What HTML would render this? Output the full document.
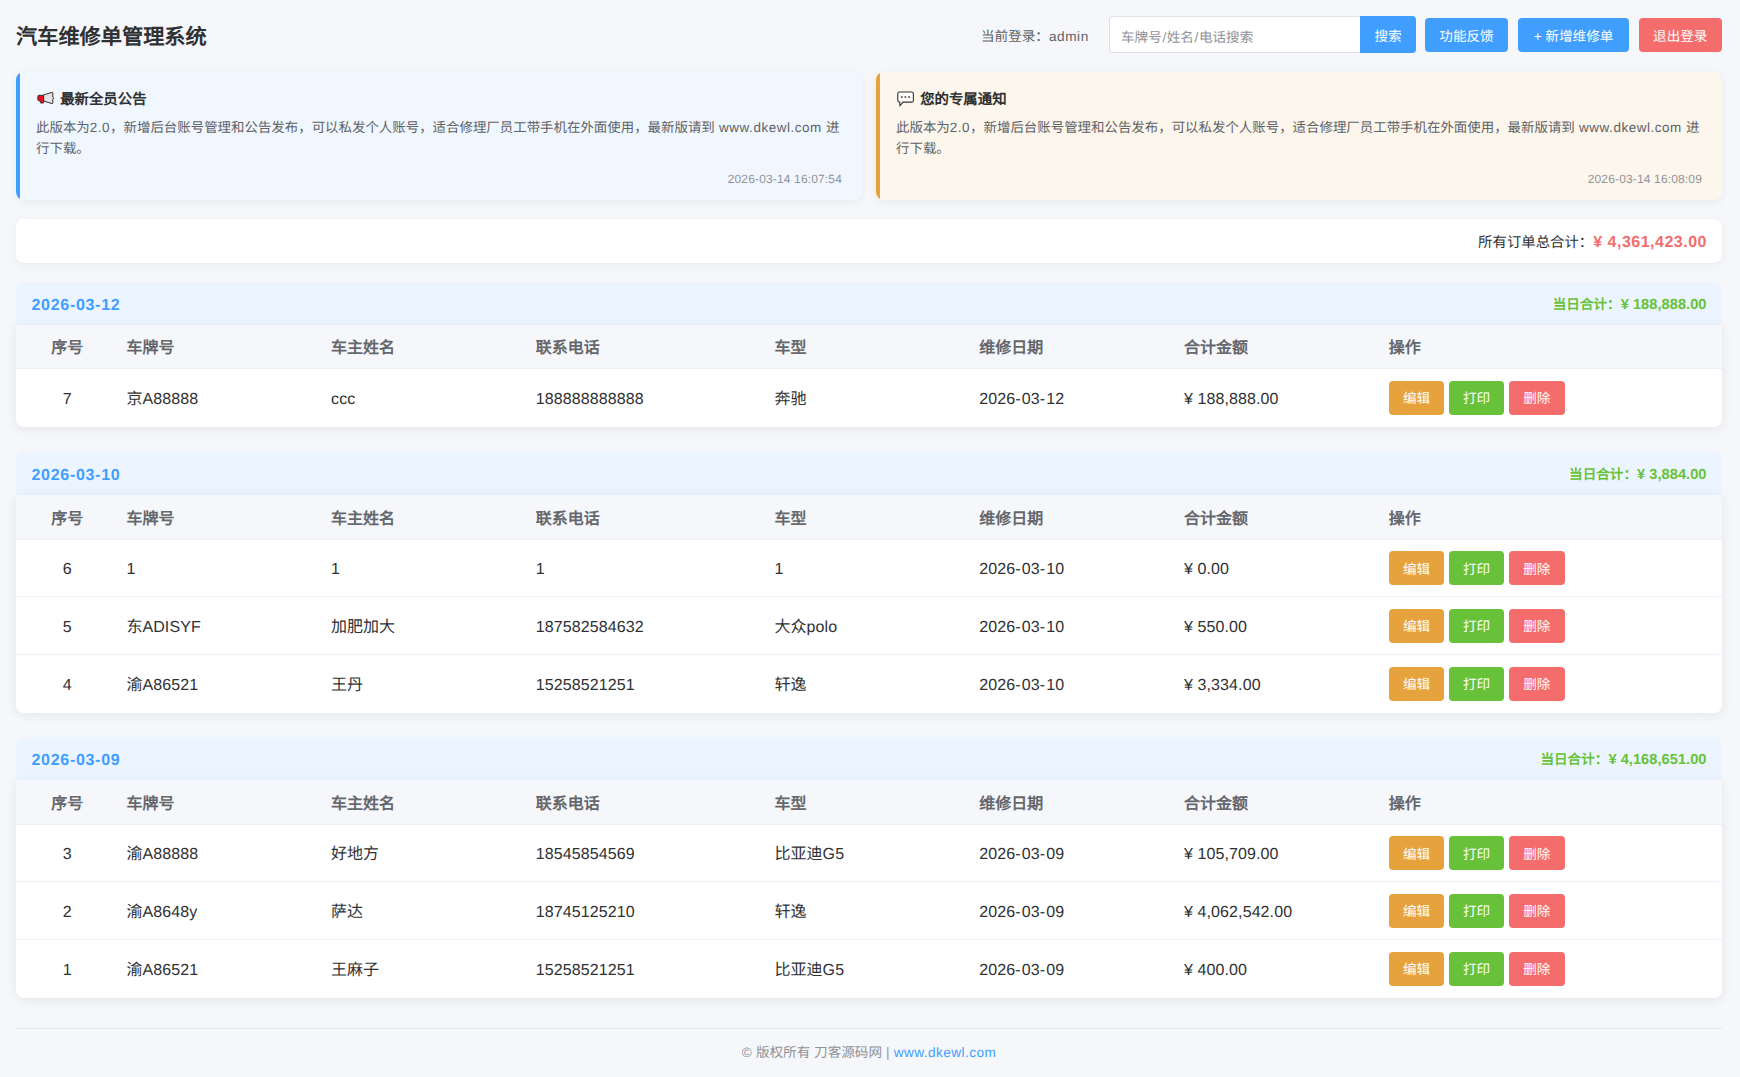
<!DOCTYPE html>
<html lang="zh-CN">
<head>
<meta charset="utf-8">
<title>汽车维修单管理系统</title>
<style>
*{box-sizing:border-box;margin:0;padding:0}
html,body{width:1740px;height:1077px;overflow:hidden}
body{background:#f5f7fa;font-family:"Liberation Sans",sans-serif;text-rendering:geometricPrecision;color:#303133;position:relative}
.abs{position:absolute}
.title{left:16px;top:22.7px;font-size:21.2px;font-weight:bold;line-height:30px;color:#303133;white-space:nowrap}
.login{left:981px;top:28px;font-size:13.6px;line-height:18px;color:#606266;white-space:nowrap}
.login .l{letter-spacing:0.55px}
.input{left:1109px;top:16.2px;width:252px;height:36.4px;background:#fff;border:1px solid #dcdfe6;border-right:none;border-radius:4px 0 0 4px;font-size:13.6px;color:#909399;padding:11.8px 0 0 11px;line-height:18px;white-space:nowrap}
.sl{margin:0 0.6px}
.btn{position:absolute;color:#fff;font-size:13.6px;line-height:18px;text-align:center;border-radius:4px;white-space:nowrap;display:flex;align-items:center;justify-content:center;padding-top:3px}
.btn span.t{position:relative;top:1px}
.blue{background:#409eff}
.red{background:#f56c6c}
.green{background:#67c23a}
.orange{background:#e6a23c}

.notice{top:72.3px;height:127.6px;width:846px;border-radius:8px;box-shadow:0 2px 10px rgba(0,0,0,0.06);overflow:hidden}
.n1{left:16px;background:#f0f7ff}
.n1 .bar{background:#409eff}
.n2{left:876px;background:#fdf6ec}
.n2 .bar{background:#e6a23c}
.bar{position:absolute;left:0;top:0;width:4px;height:100%}
.ico{position:absolute;left:0;top:3px}
.ntitle{position:absolute;left:20px;top:15.7px;height:24px;font-size:14.4px;font-weight:bold;line-height:24px;color:#303133;white-space:nowrap}
.ntitle .tt{position:absolute;left:24.2px;top:0}
.ntext{position:absolute;left:20px;font-size:13.45px;line-height:20px;color:#606266;white-space:nowrap}
.ntext .l{letter-spacing:0.55px}
.ndate{position:absolute;right:20px;top:99px;letter-spacing:0.15px;font-size:12px;line-height:16px;color:#909399;white-space:nowrap}

.summary{left:16px;top:219px;width:1706px;height:44px;background:#fff;border-radius:8px;box-shadow:0 2px 10px rgba(0,0,0,0.05)}
.sumtext{position:absolute;right:15px;top:13.5px;line-height:20px;font-size:14.4px;color:#303133;white-space:nowrap}
.sumtext b{color:#f56c6c;font-size:16px;letter-spacing:0.5px}

.group{left:16px;width:1706px}
.ghead{position:relative;height:42.9px;background:#ecf5ff;border-radius:8px 8px 0 0}
.gdate{position:absolute;left:15.5px;top:14.2px;line-height:20px;font-size:16px;font-weight:bold;color:#409eff;letter-spacing:0.7px}
.gsum{position:absolute;right:15.5px;top:12.8px;line-height:20px;font-size:13.6px;font-weight:bold;color:#67c23a;white-space:nowrap}
.gsum .l{letter-spacing:0.05px;font-size:14.6px}
.gbody{position:relative;background:#fff;border-radius:0 0 8px 8px;box-shadow:0 2px 12px rgba(0,0,0,0.08);overflow:hidden}
.row{position:relative;height:57.75px;border-bottom:1px solid #f0f2f6}
.row:last-child{border-bottom:none}
.th{height:44.4px;background:#f5f7fa;border-bottom:1px solid #eef0f4}
.c{position:absolute;top:2px;height:100%;display:flex;align-items:center;white-space:nowrap;font-size:16px;line-height:22px}
.c .l{letter-spacing:0.1px}
.c .h{letter-spacing:1.1px}
.th .c{font-weight:bold;color:#66686d;top:3px}
.c1{left:0;width:102.4px;justify-content:center}
.c2{left:110.4px}
.c3{left:315.1px}
.c4{left:519.8px}
.c5{left:758.6px}
.c6{left:963.3px}
.c7{left:1168px}
.c8{left:1372.7px}
.rb{position:absolute;top:11.5px;width:55.7px;height:34px;border-radius:4px;color:#fff;font-size:13.6px;line-height:18px;display:flex;align-items:center;justify-content:center;padding-top:3px}
.rb1{left:1372.7px}
.rb2{left:1432.7px}
.rb3{left:1493px}

.footline{left:16px;top:1028px;width:1706px;height:1px;background:#e4e7ed}
.foot{left:16px;width:1706px;top:1043px;text-align:center;font-size:13.6px;line-height:20px;color:#909399;white-space:nowrap}
.foot .l{letter-spacing:0.2px}
.foot .a{color:#409eff;letter-spacing:0.45px}
</style>
</head>
<body>
<div class="abs title">汽车维修单管理系统</div>
<div class="abs login">当前登录：<span class="l">admin</span></div>
<div class="abs input">车牌号<span class="sl">/</span>姓名<span class="sl">/</span>电话搜索</div>
<div class="btn blue" style="left:1360px;top:16.2px;width:56px;height:36.4px;padding-top:5.6px;border-radius:0 4px 4px 0">搜索</div>
<div class="btn blue" style="left:1425px;top:18px;width:83px;height:34px">功能反馈</div>
<div class="btn blue" style="left:1518px;top:18px;width:111px;height:34px">+ 新增维修单</div>
<div class="btn red" style="left:1638.5px;top:18px;width:83.5px;height:34px">退出登录</div>
<div class="abs notice n1"><div class="bar"></div><div class="ntitle"><svg class="ico" width="19" height="14" viewBox="0 0 19 14"><path d="M7.5 3.9 L16 1.4 Q16.8 1.2 16.8 2 L16.8 6.2 L17.9 7.2 L16.8 8.2 L16.8 12 Q16.8 12.8 16 12.6 L7.5 10 Z" fill="#e4e4e4" stroke="#333" stroke-width="1"/><path d="M3 4.3 L7.7 4.3 L7.7 11.3 Q7.7 12.1 6.9 12.1 L5.1 12.1 Q4.3 12.1 4.3 11.3 L4.3 9.7 L3 9.7 Q1.8 9.7 1.8 8.5 L1.8 5.5 Q1.8 4.3 3 4.3 Z" fill="#e8101e" stroke="#2a2a2a" stroke-width="0.9"/></svg><span class="tt">最新全员公告</span></div><div class="ntext" style="top:45.5px">此版本为<span class="l">2.0</span>，新增后台账号管理和公告发布，可以私发个人账号，适合修理厂员工带手机在外面使用，最新版请到<span class="l"> www.dkewl.com </span>进</div><div class="ntext" style="top:66.5px">行下载。</div><div class="ndate">2026-03-14 16:07:54</div></div>
<div class="abs notice n2"><div class="bar"></div><div class="ntitle"><svg class="ico" width="19" height="16" viewBox="0 0 19 16"><path d="M3.4 1.05 L15.6 1.05 Q17.35 1.05 17.35 2.8 L17.35 9.4 Q17.35 11.15 15.6 11.15 L7 11.15 L4 14.6 L3.7 11.1 Q1.75 10.8 1.75 9.2 L1.75 2.8 Q1.75 1.05 3.4 1.05 Z" fill="#fff" stroke="#333" stroke-width="1.1"/><circle cx="5.8" cy="6.1" r="1" fill="#555"/><circle cx="9.4" cy="6.1" r="1" fill="#555"/><circle cx="13.1" cy="6.1" r="1" fill="#555"/></svg><span class="tt">您的专属通知</span></div><div class="ntext" style="top:45.5px">此版本为<span class="l">2.0</span>，新增后台账号管理和公告发布，可以私发个人账号，适合修理厂员工带手机在外面使用，最新版请到<span class="l"> www.dkewl.com </span>进</div><div class="ntext" style="top:66.5px">行下载。</div><div class="ndate">2026-03-14 16:08:09</div></div>
<div class="abs summary"><div class="sumtext">所有订单总合计：<b>¥ 4,361,423.00</b></div></div>
<div class="abs group" style="top:281.8px"><div class="ghead"><div class="gdate">2026-03-12</div><div class="gsum">当日合计：<span class="l">¥ 188,888.00</span></div></div><div class="gbody"><div class="row th"><div class="c c1">序号</div><div class="c c2">车牌号</div><div class="c c3">车主姓名</div><div class="c c4">联系电话</div><div class="c c5">车型</div><div class="c c6">维修日期</div><div class="c c7">合计金额</div><div class="c c8">操作</div></div><div class="row"><div class="c c1"><span class="l">7</span></div><div class="c c2">京<span class="l">A88888</span></div><div class="c c3"><span class="l">ccc</span></div><div class="c c4"><span class="l">188888888888</span></div><div class="c c5">奔驰</div><div class="c c6"><span class="l">2026<span class="h">-</span>03<span class="h">-</span>12</span></div><div class="c c7"><span class="l">¥ 188,888.00</span></div><div class="rb orange rb1">编辑</div><div class="rb green rb2">打印</div><div class="rb red rb3">删除</div></div></div></div>

<div class="abs group" style="top:452.3px"><div class="ghead"><div class="gdate">2026-03-10</div><div class="gsum">当日合计：<span class="l">¥ 3,884.00</span></div></div><div class="gbody"><div class="row th"><div class="c c1">序号</div><div class="c c2">车牌号</div><div class="c c3">车主姓名</div><div class="c c4">联系电话</div><div class="c c5">车型</div><div class="c c6">维修日期</div><div class="c c7">合计金额</div><div class="c c8">操作</div></div><div class="row"><div class="c c1"><span class="l">6</span></div><div class="c c2"><span class="l">1</span></div><div class="c c3"><span class="l">1</span></div><div class="c c4"><span class="l">1</span></div><div class="c c5"><span class="l">1</span></div><div class="c c6"><span class="l">2026<span class="h">-</span>03<span class="h">-</span>10</span></div><div class="c c7"><span class="l">¥ 0.00</span></div><div class="rb orange rb1">编辑</div><div class="rb green rb2">打印</div><div class="rb red rb3">删除</div></div><div class="row"><div class="c c1"><span class="l">5</span></div><div class="c c2">东<span class="l">ADISYF</span></div><div class="c c3">加肥加大</div><div class="c c4"><span class="l">187582584632</span></div><div class="c c5">大众<span class="l">polo</span></div><div class="c c6"><span class="l">2026<span class="h">-</span>03<span class="h">-</span>10</span></div><div class="c c7"><span class="l">¥ 550.00</span></div><div class="rb orange rb1">编辑</div><div class="rb green rb2">打印</div><div class="rb red rb3">删除</div></div><div class="row"><div class="c c1"><span class="l">4</span></div><div class="c c2">渝<span class="l">A86521</span></div><div class="c c3">王丹</div><div class="c c4"><span class="l">15258521251</span></div><div class="c c5">轩逸</div><div class="c c6"><span class="l">2026<span class="h">-</span>03<span class="h">-</span>10</span></div><div class="c c7"><span class="l">¥ 3,334.00</span></div><div class="rb orange rb1">编辑</div><div class="rb green rb2">打印</div><div class="rb red rb3">删除</div></div></div></div>

<div class="abs group" style="top:737.3px"><div class="ghead"><div class="gdate">2026-03-09</div><div class="gsum">当日合计：<span class="l">¥ 4,168,651.00</span></div></div><div class="gbody"><div class="row th"><div class="c c1">序号</div><div class="c c2">车牌号</div><div class="c c3">车主姓名</div><div class="c c4">联系电话</div><div class="c c5">车型</div><div class="c c6">维修日期</div><div class="c c7">合计金额</div><div class="c c8">操作</div></div><div class="row"><div class="c c1"><span class="l">3</span></div><div class="c c2">渝<span class="l">A88888</span></div><div class="c c3">好地方</div><div class="c c4"><span class="l">18545854569</span></div><div class="c c5">比亚迪<span class="l">G5</span></div><div class="c c6"><span class="l">2026<span class="h">-</span>03<span class="h">-</span>09</span></div><div class="c c7"><span class="l">¥ 105,709.00</span></div><div class="rb orange rb1">编辑</div><div class="rb green rb2">打印</div><div class="rb red rb3">删除</div></div><div class="row"><div class="c c1"><span class="l">2</span></div><div class="c c2">渝<span class="l">A8648y</span></div><div class="c c3">萨达</div><div class="c c4"><span class="l">18745125210</span></div><div class="c c5">轩逸</div><div class="c c6"><span class="l">2026<span class="h">-</span>03<span class="h">-</span>09</span></div><div class="c c7"><span class="l">¥ 4,062,542.00</span></div><div class="rb orange rb1">编辑</div><div class="rb green rb2">打印</div><div class="rb red rb3">删除</div></div><div class="row"><div class="c c1"><span class="l">1</span></div><div class="c c2">渝<span class="l">A86521</span></div><div class="c c3">王麻子</div><div class="c c4"><span class="l">15258521251</span></div><div class="c c5">比亚迪<span class="l">G5</span></div><div class="c c6"><span class="l">2026<span class="h">-</span>03<span class="h">-</span>09</span></div><div class="c c7"><span class="l">¥ 400.00</span></div><div class="rb orange rb1">编辑</div><div class="rb green rb2">打印</div><div class="rb red rb3">删除</div></div></div></div>

<div class="abs footline"></div>
<div class="abs foot"><span class="l">© </span>版权所有 刀客源码网<span class="l"> | </span><span class="a">www.dkewl.com</span></div>
</body>
</html>
